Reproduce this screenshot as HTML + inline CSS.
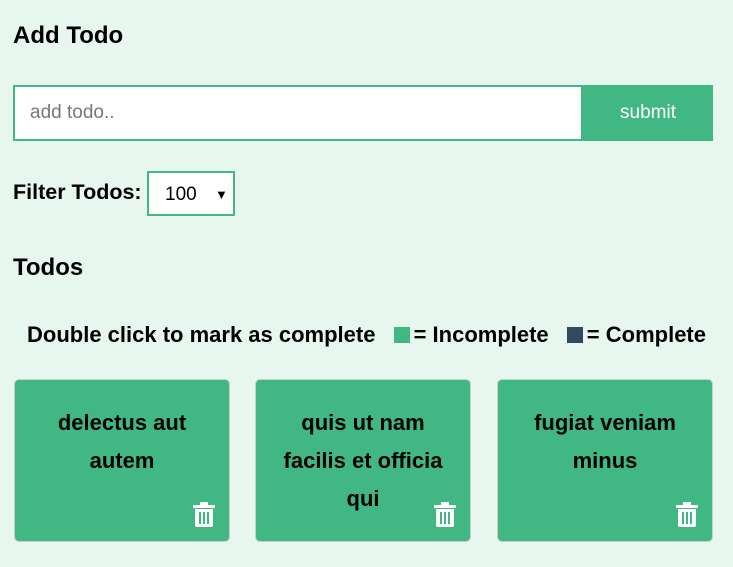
<!DOCTYPE html>
<html><head><style>
body{margin:0;background:#e7f6ee;font-family:"Liberation Sans",Arial,sans-serif;width:733px;height:567px;overflow:hidden;position:relative}
h1{position:absolute;left:13px;top:22px;margin:0;font-size:24px;font-weight:bold}
.inp{position:absolute;left:13px;top:85px;width:566px;height:52px;border:2px solid #41b883;background:#fff;box-sizing:content-box}
.inp span{position:absolute;left:15px;top:15px;font-size:19px;color:#777}
.btn{position:absolute;left:583px;top:85px;width:130px;height:56px;background:#41b883;color:#fff;font-size:19px;text-align:center;line-height:56px}
.fl{position:absolute;left:13px;top:180px;font-size:21.5px;font-weight:bold}
.sel{position:absolute;left:147px;top:171px;width:84px;height:41px;border:2px solid #41b883;background:#fff}
.sel span{position:absolute;left:16px;top:11px;font-size:19px}
.sel i{position:absolute;left:66px;top:14px;font-style:normal;font-size:13px}
h2{position:absolute;left:13px;top:254px;margin:0;font-size:24px;font-weight:bold}
.leg{position:absolute;left:0;width:733px;top:322px;text-align:center;font-size:22px;font-weight:bold}
.sq{display:inline-block;width:16px;height:16px;vertical-align:-1px;margin:0 4px 0 12px}
.card{position:absolute;top:379px;width:216px;height:163px;background:#41b883;border:1px solid #c8d0cc;border-radius:5px;box-sizing:border-box;text-align:center;font-size:22px;font-weight:bold;line-height:38px;padding:24px 14px 0}
.card svg{position:absolute;right:14px;bottom:14px}
</style></head><body>
<h1>Add Todo</h1>
<div class="inp"><span>add todo..</span></div>
<div class="btn">submit</div>
<div class="fl">Filter Todos:</div>
<div class="sel"><span>100</span><i>▼</i></div>
<h2>Todos</h2>
<div class="leg">Double click to mark as complete <span class="sq" style="background:#41b883"></span>= Incomplete <span class="sq" style="background:#35495e"></span>= Complete</div>
<div class="card" style="left:14px">delectus aut autem<svg width="22" height="25" viewBox="0 0 22 25"><rect x="7" y="0" width="8" height="3" fill="#fff"/><rect x="0" y="3" width="22" height="3" fill="#fff"/><path d="M2 7h18v16a2 2 0 0 1-2 2H4a2 2 0 0 1-2-2z" fill="#fff"/><rect x="6" y="10" width="2" height="12" fill="#41b883"/><rect x="10" y="10" width="2" height="12" fill="#41b883"/><rect x="14" y="10" width="2" height="12" fill="#41b883"/></svg></div>
<div class="card" style="left:255px">quis ut nam facilis et officia qui<svg width="22" height="25" viewBox="0 0 22 25"><rect x="7" y="0" width="8" height="3" fill="#fff"/><rect x="0" y="3" width="22" height="3" fill="#fff"/><path d="M2 7h18v16a2 2 0 0 1-2 2H4a2 2 0 0 1-2-2z" fill="#fff"/><rect x="6" y="10" width="2" height="12" fill="#41b883"/><rect x="10" y="10" width="2" height="12" fill="#41b883"/><rect x="14" y="10" width="2" height="12" fill="#41b883"/></svg></div>
<div class="card" style="left:497px">fugiat veniam minus<svg width="22" height="25" viewBox="0 0 22 25"><rect x="7" y="0" width="8" height="3" fill="#fff"/><rect x="0" y="3" width="22" height="3" fill="#fff"/><path d="M2 7h18v16a2 2 0 0 1-2 2H4a2 2 0 0 1-2-2z" fill="#fff"/><rect x="6" y="10" width="2" height="12" fill="#41b883"/><rect x="10" y="10" width="2" height="12" fill="#41b883"/><rect x="14" y="10" width="2" height="12" fill="#41b883"/></svg></div>
</body></html>
